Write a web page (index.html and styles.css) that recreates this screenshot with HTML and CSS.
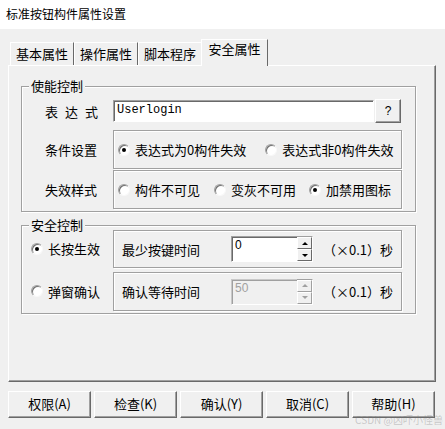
FILE: index.html
```html
<!DOCTYPE html>
<html lang="zh">
<head>
<meta charset="utf-8">
<title>标准按钮构件属性设置</title>
<link rel="stylesheet" href="styles.css">
</head>
<body>
<div class="titlebar">标准按钮构件属性设置</div>
<div class="dialog">
  <div class="tabs">
    <div class="tab">基本属性</div>
    <div class="tab">操作属性</div>
    <div class="tab">脚本程序</div>
    <div class="tab active">安全属性</div>
  </div>
  <div class="panel">
    <div class="group g1">
      <span class="legend">使能控制</span>
      <div class="row r-expr">
        <div class="label spaced">表达式</div>
        <div class="textbox">Userlogin</div>
        <div class="qbtn">?</div>
      </div>
      <div class="row r-cond">
        <div class="label">条件设置</div>
        <div class="box">
          <span class="opt"><span class="radio on"></span>表达式为0构件失效</span>
          <span class="opt o2"><span class="radio"></span>表达式非0构件失效</span>
        </div>
      </div>
      <div class="row r-style">
        <div class="label">失效样式</div>
        <div class="box">
          <span class="opt"><span class="radio"></span>构件不可见</span>
          <span class="opt o3"><span class="radio"></span>变灰不可用</span>
          <span class="opt o4"><span class="radio on"></span>加禁用图标</span>
        </div>
      </div>
    </div>
    <div class="group g2">
      <span class="legend">安全控制</span>
      <div class="row r-a">
        <div class="label2"><span class="opt"><span class="radio on"></span>长按生效</span></div>
        <div class="box sbox">
          <span class="slabel">最少按键时间</span>
          <div class="spin">
            <div class="spinval">0</div>
            <div class="spinbtns">
              <div class="sb"><span class="tri up"></span></div>
              <div class="sb"><span class="tri down"></span></div>
            </div>
          </div>
          <span class="unit">（×0.1）秒</span>
        </div>
      </div>
      <div class="row r-b">
        <div class="label2"><span class="opt"><span class="radio"></span>弹窗确认</span></div>
        <div class="box sbox">
          <span class="slabel">确认等待时间</span>
          <div class="spin disabled">
            <div class="spinval">50</div>
            <div class="spinbtns">
              <div class="sb"><span class="tri up"></span></div>
              <div class="sb"><span class="tri down"></span></div>
            </div>
          </div>
          <span class="unit">（×0.1）秒</span>
        </div>
      </div>
    </div>
  </div>
  <div class="buttons">
    <div class="btn">权限(A)</div>
    <div class="btn">检查(K)</div>
    <div class="btn">确认(Y)</div>
    <div class="btn">取消(C)</div>
    <div class="btn">帮助(H)</div>
    <span class="watermark">CSDN @凶吓小怪兽</span>
  </div>
</div>
</body>
</html>
```

FILE: styles.css
```css
* { box-sizing: border-box; }
html, body { margin: 0; padding: 0; }
body {
  width: 445px;
  height: 429px;
  background: #f0f0f0;
  font-family: "Noto Sans CJK SC", "Noto Sans", sans-serif;
  font-size: 13px;
  color: #000;
  overflow: hidden;
}
.titlebar {
  height: 29px;
  background: #fff;
  font-size: 12px;
  line-height: 27px;
  padding-left: 6px;
}
.dialog {
  padding: 10px 0 0 8px;
}
.tabs {
  display: flex;
  align-items: flex-end;
  height: 26px;
  padding-left: 2px;
}
.tab {
  width: 64px;
  height: 23px;
  border-top: 1px solid #fff;
  border-left: 1px solid #fff;
  border-right: 1px solid #696969;
  line-height: 21px;
  text-align: center;
}
.tab.active {
  position: relative;
  z-index: 1;
  width: 67px;
  height: 27px;
  margin-left: -1px;
  margin-bottom: -1px;
  background: #f0f0f0;
  line-height: 18px;
}
.panel {
  width: 428px;
  height: 317px;
  border-top: 1px solid #fff;
  border-left: 1px solid #fff;
  border-right: 1px solid #696969;
  border-bottom: 1px solid #696969;
  box-shadow: inset -1px -1px 0 #a0a0a0;
  padding-top: 20px;
  padding-left: 12px;
}
.group {
  position: relative;
  width: 395px;
  border: 1px solid #a0a0a0;
  box-shadow: inset 1px 1px 0 #fff, 1px 1px 0 #fff;
}
.legend {
  position: absolute;
  top: -9px;
  left: 7px;
  padding: 0 2px;
  line-height: 16px;
  background: #f0f0f0;
}
.g1 { height: 126px; padding-top: 12px; }
.g2 { height: 89px; margin-top: 13px; padding-top: 4px; }
.row { display: flex; align-items: center; }
.label {
  width: 91px;
  padding-left: 23px;
}
.label.spaced { letter-spacing: 7px; }
.label2 {
  width: 91px;
  padding-left: 9px;
}
.textbox {
  width: 261px;
  height: 22px;
  background: #fff;
  border-top: 1px solid #a0a0a0;
  border-left: 1px solid #a0a0a0;
  border-right: 1px solid #fff;
  border-bottom: 1px solid #fff;
  box-shadow: inset 1px 1px 0 #696969;
  font-family: "Liberation Mono", monospace;
  font-size: 12px;
  line-height: 19px;
  padding-left: 3px;
}
.qbtn {
  width: 26px;
  height: 24px;
  margin-left: 1px;
  border-top: 1px solid #fff;
  border-left: 1px solid #fff;
  border-right: 1px solid #696969;
  border-bottom: 1px solid #696969;
  box-shadow: inset -1px -1px 0 #a0a0a0;
  font-family: "Liberation Sans", sans-serif;
  font-size: 12px;
  line-height: 22px;
  text-align: center;
}
.box {
  width: 289px;
  height: 39px;
  border: 1px solid #a0a0a0;
  box-shadow: inset 1px 1px 0 #fff, 1px 1px 0 #fff;
  display: flex;
  align-items: center;
  padding-left: 4px;
}
.r-cond { margin-top: 7px; }
.r-style { margin-top: 1px; }
.r-a .box { height: 38px; }
.r-b { margin-top: 4px; }
.opt {
  display: inline-flex;
  align-items: center;
  white-space: nowrap;
}
.o2 { margin-left: 19px; }
.o3 { margin-left: 14px; }
.o4 { margin-left: 13px; }
.radio {
  position: relative;
  display: inline-block;
  width: 12px;
  height: 12px;
  border-radius: 50%;
  background: #fff;
  border: 1px solid;
  border-color: #a0a0a0 #f8f8f8 #f8f8f8 #a0a0a0;
  box-shadow: inset 1px 1px 0 #707070;
  margin-right: 5px;
}
.radio.on::after {
  content: "";
  position: absolute;
  left: 3px;
  top: 3px;
  width: 4px;
  height: 4px;
  border-radius: 50%;
  background: #000;
}
.sbox { padding-left: 8px; }
.slabel { width: 109px; }
.spin {
  display: flex;
  height: 26px;
}
.spinval {
  width: 66px;
  height: 26px;
  background: #fff;
  border-top: 1px solid #a0a0a0;
  border-left: 1px solid #a0a0a0;
  border-bottom: 1px solid #fff;
  box-shadow: inset 1px 1px 0 #696969;
  font-family: "Liberation Sans", sans-serif;
  font-size: 12px;
  line-height: 14px;
  padding: 1px 0 0 3px;
}
.spinbtns {
  width: 16px;
  display: flex;
  flex-direction: column;
  border-top: 1px solid #a0a0a0;
  border-right: 1px solid #fff;
  border-bottom: 1px solid #fff;
}
.sb {
  height: 12px;
  flex: 1;
  border-top: 1px solid #fff;
  border-left: 1px solid #fff;
  border-right: 1px solid #696969;
  border-bottom: 1px solid #696969;
  display: flex;
  align-items: center;
  justify-content: center;
}
.tri {
  width: 0;
  height: 0;
  border-left: 3px solid transparent;
  border-right: 3px solid transparent;
}
.tri.up { border-bottom: 3px solid #000; }
.tri.down { border-top: 3px solid #000; }
.spin.disabled .spinval {
  background: #f0f0f0;
  color: #a0a0a0;
  box-shadow: inset 1px 1px 0 #a0a0a0;
  border-top-color: #c8c8c8;
  border-left-color: #c8c8c8;
}
.spin.disabled .tri.up { border-bottom-color: #a0a0a0; }
.spin.disabled .tri.down { border-top-color: #a0a0a0; }
.spin.disabled .sb { border-right-color: #a0a0a0; border-bottom-color: #a0a0a0; }
.unit { margin-left: 10px; }
.buttons {
  position: relative;
  display: flex;
  gap: 3px;
  margin-top: 9px;
}
.btn {
  width: 83px;
  height: 27px;
  border-top: 1px solid #fff;
  border-left: 1px solid #fff;
  border-right: 1px solid #696969;
  border-bottom: 1px solid #696969;
  box-shadow: inset -1px -1px 0 #a0a0a0;
  text-align: center;
  line-height: 24px;
}
.watermark {
  position: absolute;
  right: 2px;
  top: 24px;
  font-size: 10px;
  line-height: 10px;
  color: rgba(120, 120, 120, 0.35);
  white-space: nowrap;
}
```
